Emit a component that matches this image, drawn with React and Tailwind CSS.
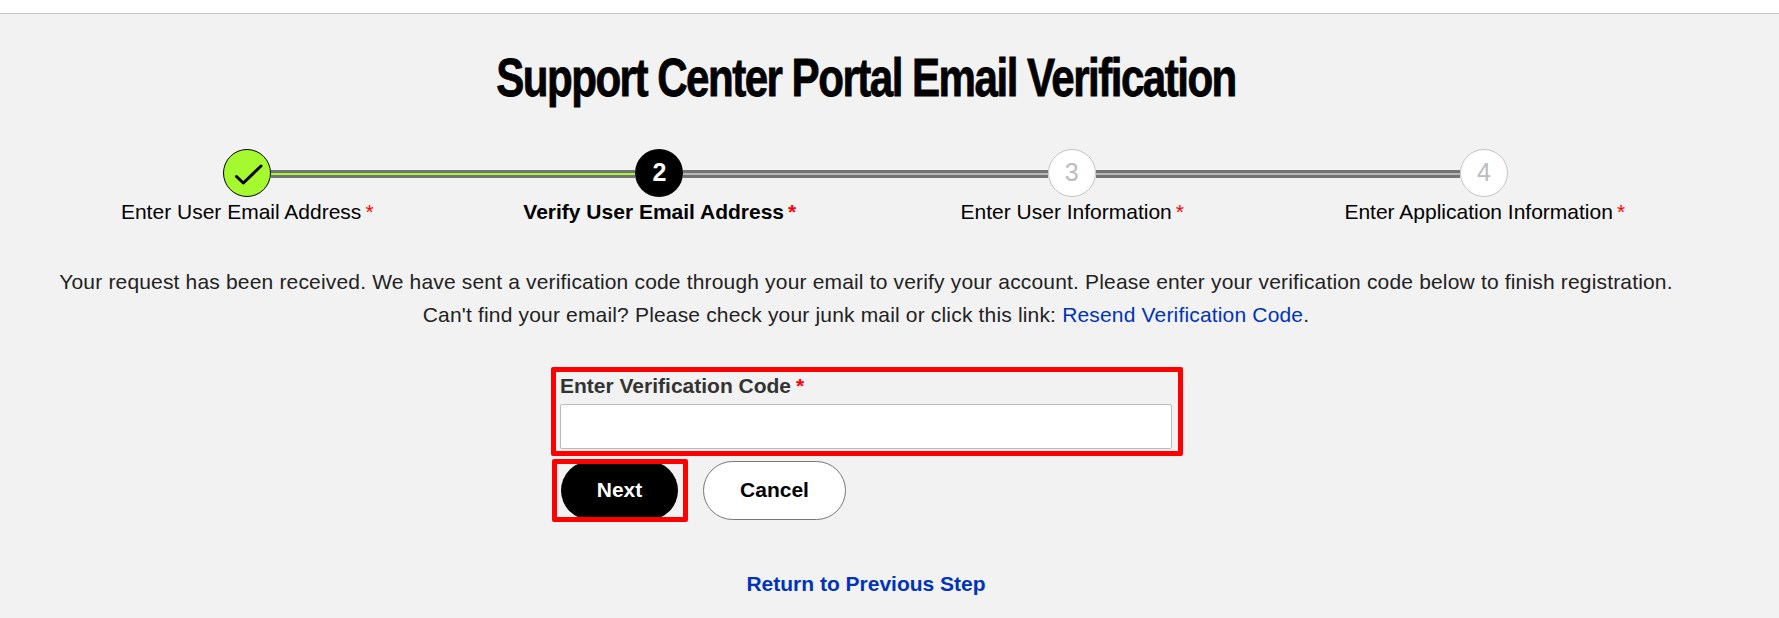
const font = { fontFamily: '"Liberation Sans", Arial, sans-serif' };

const steps = [
  { label: 'Enter User Email Address' },
  { label: 'Verify User Email Address', active: true },
  { label: 'Enter User Information' },
  { label: 'Enter Application Information' },
];

function Rail({ done }) {
  return (
    <div className={`mt-[2px] h-2 flex-1 border-y-[3px] border-[#747474] ${done ? 'bg-[#a4f92f]' : 'bg-[#b8b8b8]'}`}></div>
  );
}

function Pending({ n }) {
  return (
    <div className="flex h-12 w-12 shrink-0 items-center justify-center rounded-full border border-[#c4c4c4] bg-white text-[25px] text-[#bcbcbc]">
      {n}
    </div>
  );
}

export default function App() {
  return (
    <div className="min-h-[618px] bg-white" style={font}>
      <div className="h-[13px] bg-white"></div>
      <div className="h-[605px] overflow-hidden border-t border-[#c4c4c4] bg-[#f2f2f2] pr-[47px]">
        <h1 className="mt-[28px] scale-x-[0.78] whitespace-nowrap text-center text-[54px] font-bold leading-[70px] tracking-[-1.95px] text-black [-webkit-text-stroke:0.8px_#000]">
          Support Center Portal Email Verification
        </h1>

        <div className="mx-auto mt-[37px] w-[1650px]">
          <div className="flex items-center pl-[182px] pr-[183px]">
            <div className="flex h-12 w-12 shrink-0 items-center justify-center rounded-full border border-black bg-[#a4f92f]">
              <svg width="48" height="48" viewBox="0 0 48 48" fill="none" className="shrink-0">
                <path d="M13.5 27.5 L20.3 34 L38 17" stroke="#000" strokeWidth="3" strokeLinecap="round" strokeLinejoin="round" />
              </svg>
            </div>
            <Rail done />
            <div className="flex h-12 w-12 shrink-0 items-center justify-center rounded-full bg-black text-[25px] font-bold text-white">
              2
            </div>
            <Rail />
            <Pending n={3} />
            <Rail />
            <Pending n={4} />
          </div>
          <div className="mt-[2px] grid grid-cols-4 text-center text-[21px] leading-[26px] text-black">
            {steps.map((s) => (
              <div key={s.label} className={s.active ? 'font-bold' : ''}>
                {s.label}<span className="ml-[4px] text-[#f00]">*</span>
              </div>
            ))}
          </div>
        </div>

        <div className="mt-[40px] text-center text-[21px] leading-[33px] tracking-[0.17px] text-[#222]">
          <p>
            Your request has been received. We have sent a verification code through your email to verify your account. Please enter your verification code below to finish registration.
          </p>
          <p>
            Can't find your email? Please check your junk mail or click this link:{' '}
            <a className="text-[#0033bb]" href="#">Resend Verification Code</a>.
          </p>
        </div>

        <div className="relative ml-[560px] mt-[43px] w-[612px]">
          <div className="pointer-events-none absolute -left-[9px] -right-[11px] -top-[7px] h-[89px] rounded-[2px] border-[5px] border-[#f00]"></div>
          <label className="block text-[21px] font-bold leading-[24px] text-[#333]">
            Enter Verification Code<span className="ml-[5px] text-[#f00]">*</span>
          </label>
          <input className="mt-[6px] block h-[45px] w-full rounded-[2px] border border-[#bbb] bg-white" />

          <div className="relative ml-px mt-[12px] flex items-center gap-[25px]">
            <div className="pointer-events-none absolute -left-[9px] -top-[2px] z-10 h-[63px] w-[136px] rounded-[2px] border-[5px] border-[#f00]"></div>
            <button className="h-[59px] w-[117px] rounded-full bg-black pb-[2px] text-[21px] font-bold text-white">Next</button>
            <button className="h-[59px] w-[143px] rounded-full border border-[#767676] bg-white pb-[2px] text-[21px] font-bold text-black">Cancel</button>
          </div>
        </div>

        <div className="mt-[51px] text-center text-[21px] font-bold leading-[26px]">
          <a className="text-[#0033bb]" href="#">Return to Previous Step</a>
        </div>
      </div>
    </div>
  );
}
